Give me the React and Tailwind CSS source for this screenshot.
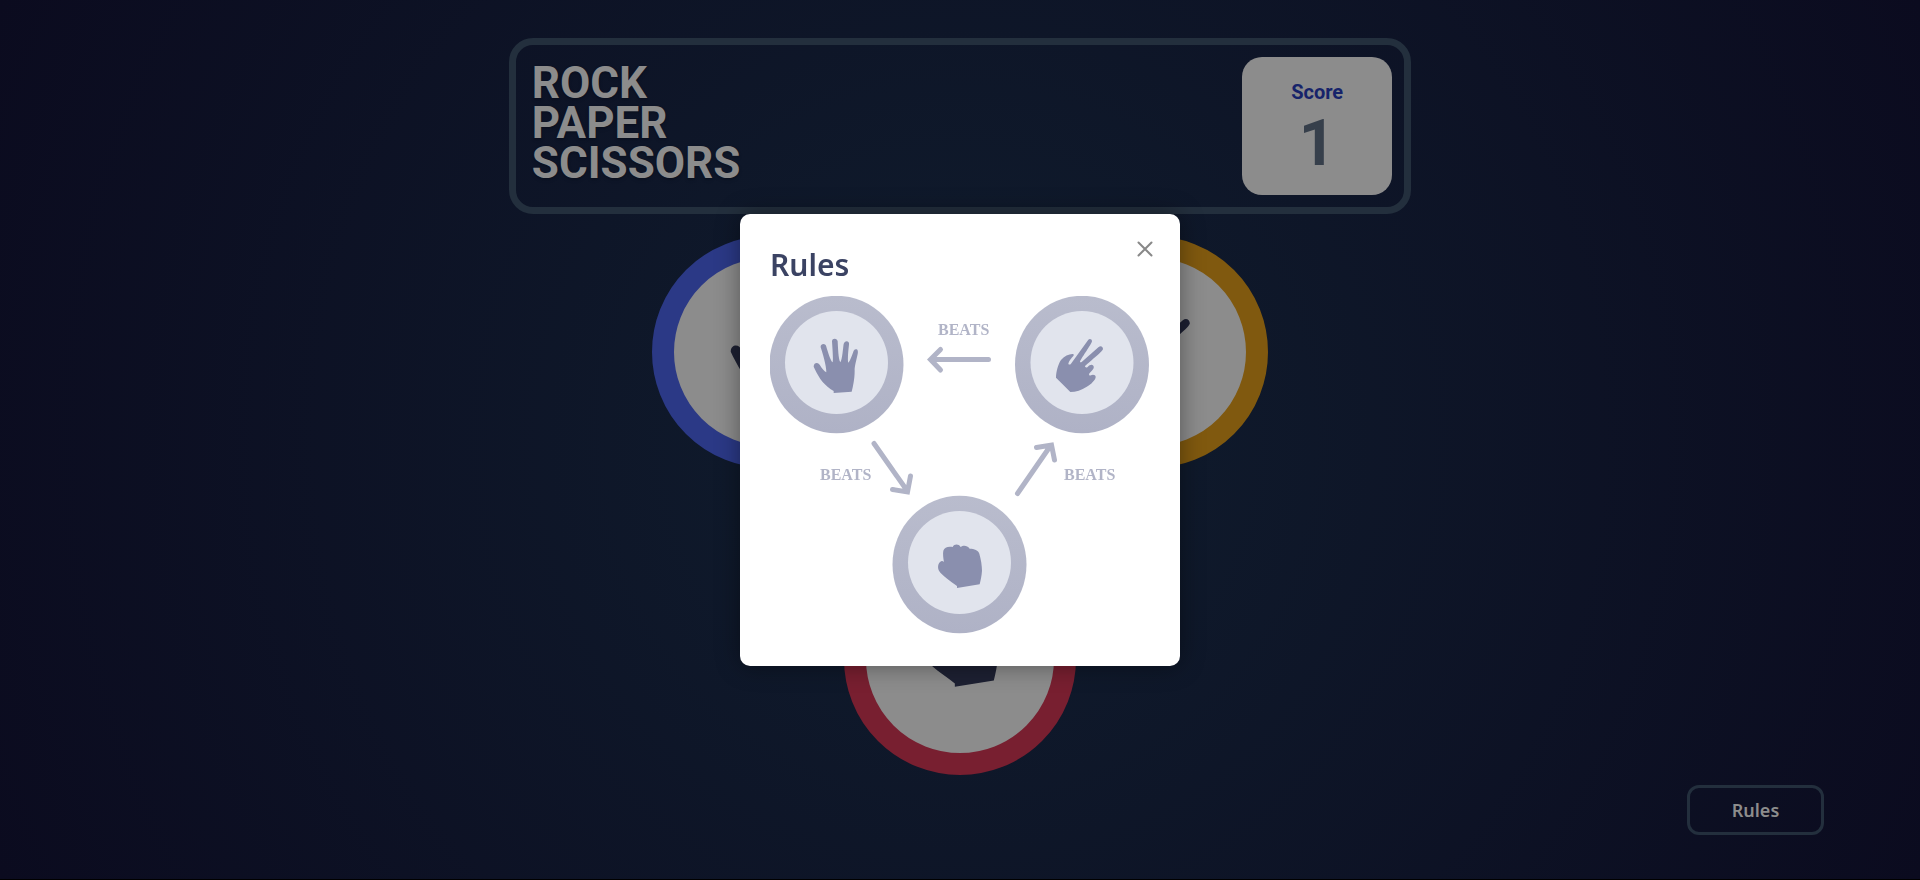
import React from "react";

const paperPath =
  "M611 549 L611 543 C596 535 580 520 571 507 C562 492 556 481 551 470 C551 462 556 459 560 459 C565 459 568 462 570 466 C575 475 583 484 589 487 C589 466 578 431 572 412 C571 405 576 402 580 402 C585 402 588 405 589 410 C594 427 600 447 607 457 C611 455 607 411 606 394 C606 388 610 386 614 386 C619 386 622 389 623 394 C624 411 625 448 631 457 C637 449 639 414 641 402 C643 397 646 394 650 394 C655 395 658 398 657 404 C655 420 652 451 655 458 C661 452 668 430 671 422 C674 418 678 417 682 419 C684 422 684 427 683 432 C679 451 673 472 674 482 C674 503 670 526 665 545 Z";
const scissorsPath =
  "M481 546 L438 503 C438 486 445 461 453 450 C462 438 477 432 487 432 C492 432 492 435 490 438 C484 445 476 453 475 461 C476 464 480 465 483 461 L535 389 C539 385 546 387 546 394 C545 402 515 443 510 455 C510 457 512 458 515 456 L566 411 C572 406 579 410 579 417 C577 426 533 459 525 469 C525 472 529 474 533 471 C539 464 546 462 550 467 C554 474 549 479 539 489 C535 494 538 498 543 496 C550 492 558 496 557 502 C556 512 541 524 529 531 C516 540 497 546 481 546 Z";
const rockPath =
  "M231 504 L231 498 C213 484 186 467 177 452 C172 442 174 431 181 425 C185 422 189 423 192 426 C190 415 188 401 190 392 C193 382 205 378 218 381 C223 372 235 371 242 381 C249 376 261 375 269 386 C283 386 295 391 298 401 C303 418 306 438 306 452 C305 468 302 480 299 493 Z";

function Emblem({ cx, cy, children }) {
  return (
    <g>
      <ellipse cx={cx} cy={cy + 2} rx="67" ry="68.7" fill="url(#ring)" />
      <circle cx={cx} cy={cy} r="51.5" fill="#E1E4ED" />
      {children}
    </g>
  );
}

function RulesDiagram() {
  return (
    <svg viewBox="0 0 380 338" className="block w-full" role="img" aria-label="Paper beats rock, rock beats scissors, scissors beats paper">
      <defs>
        <linearGradient id="ring" x1="0" y1="0" x2="0" y2="1">
          <stop offset="0" stopColor="#B9BCCD" />
          <stop offset="1" stopColor="#AFB2C6" />
        </linearGradient>
      </defs>
      <Emblem cx={66.5} cy={66.5}>
        <path transform="translate(-140 -86) scale(.33333)" d={paperPath} fill="#8A8FAE" />
      </Emblem>
      <Emblem cx={312} cy={66.5}>
        <path transform="translate(140 -86) scale(.33333)" d={scissorsPath} fill="#8A8FAE" />
      </Emblem>
      <Emblem cx={189.5} cy={266.5}>
        <path transform="translate(110 124) scale(.33333)" d={rockPath} fill="#8A8FAE" />
      </Emblem>
      <g fill="none" stroke="#B1B4C7" strokeWidth="5" strokeLinecap="round" strokeLinejoin="miter">
        <path d="M218.500 63.500H161 M170.500 53.500L160.500 63.500L170.500 74" />
        <path d="M104 147.500L137 194.500 M122.500 193.500L137.500 196L140.500 180" />
        <path d="M247.500 197.500L280 150.500 M266.500 151.500L281.500 149L284.500 164" />
      </g>
      <g fill="#B1B4C7" fontFamily="Liberation Serif, serif" fontWeight="700" fontSize="16">
        <text x="168" y="39">BEATS</text>
        <text x="50" y="184">BEATS</text>
        <text x="294" y="184">BEATS</text>
      </g>
    </svg>
  );
}

function Choice({ label, className, iconClassName, viewBox, path }) {
  return (
    <button
      type="button"
      aria-label={label}
      className={`flex size-[232px] items-center justify-center rounded-full border-[22px] bg-[#8c8c8c] ${className}`}
    >
      <svg viewBox={viewBox} className={iconClassName} aria-hidden="true">
        <path d={path} fill="#1d2032" />
      </svg>
    </button>
  );
}

export default function App() {
  return (
    <div className="flex min-h-screen flex-col bg-black font-['Noto_Sans',sans-serif]">
      <div className="relative flex grow flex-col items-center bg-[radial-gradient(circle_at_center,#101d2e_0%,#0b0b1f_100%)] pt-[38px]">
        <header className="flex w-[47%] items-center justify-between rounded-3xl border-[7px] border-[#232f3d] px-3 py-3">
          <h1 className="self-start pt-1.5 pl-1 font-[Roboto,sans-serif] text-[44px] leading-10 font-bold text-[#8c8c8c] text-shadow-md">
            ROCK
            <br />
            PAPER
            <br />
            SCISSORS
          </h1>
          <div className="flex h-[138px] w-[150px] flex-col items-center justify-center rounded-[20px] bg-[#8c8c8c] pt-1 font-[Roboto,sans-serif] font-bold">
            <p className="text-xl leading-8 text-[#16236a]">Score</p>
            <p className="text-[64px] leading-[72px] text-[#363f4b]">1</p>
          </div>
        </header>

        <main className="mt-[22px] flex flex-col items-center gap-[75px]">
          <div className="flex gap-[152px]">
            <Choice label="Paper" className="border-[#2b3986] pb-1" iconClassName="h-24 w-20" viewBox="547 382 140 170" path={paperPath} />
            <Choice label="Scissors" className="border-[#80590f] pb-1" iconClassName="h-24 w-20" viewBox="435 383 148 166" path={scissorsPath} />
          </div>
          <Choice label="Rock" className="border-[#781f30] pb-5" iconClassName="size-[78px]" viewBox="172 370 136 136" path={rockPath} />
        </main>

        <button
          type="button"
          className="absolute right-24 bottom-11 h-[50px] w-[137px] rounded-xl border-3 border-[#232f3d] text-lg font-semibold text-[#8c8c8c]"
        >
          Rules
        </button>
      </div>
      <div className="h-px" />

      <div className="fixed inset-0 flex items-center justify-center">
        <section
          role="dialog"
          aria-modal="true"
          aria-labelledby="rules-title"
          className="relative w-[440px] rounded-[10px] bg-white px-[30px] py-8 shadow-[0_0_24px_rgba(0,0,0,0.4)]"
        >
          <h2 id="rules-title" className="mb-3 text-3xl leading-[38px] font-semibold text-[#3b4363]">
            Rules
          </h2>
          <RulesDiagram />
          <button type="button" aria-label="Close" className="absolute top-[23px] right-[23px] p-1">
            <svg viewBox="0 0 16 16" className="size-4" fill="none" stroke="#888" strokeWidth="2" strokeLinecap="round" aria-hidden="true">
              <path d="M1.500 1.500L14.500 14.500M14.500 1.500L1.500 14.500" />
            </svg>
          </button>
        </section>
      </div>
    </div>
  );
}
